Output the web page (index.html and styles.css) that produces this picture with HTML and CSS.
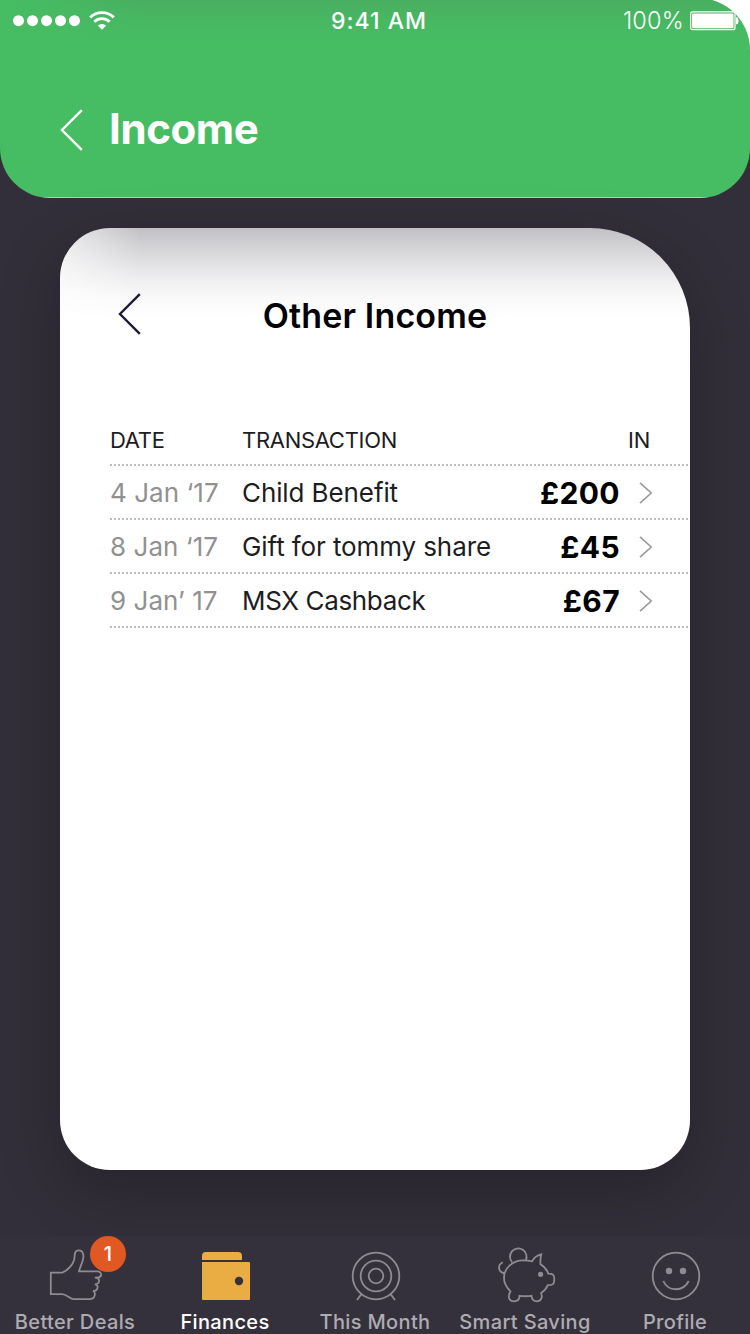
FILE: index.html
```html
<!DOCTYPE html>
<html lang="en">
<head>
<meta charset="utf-8">
<title>Income</title>
<link rel="stylesheet" href="styles.css">
</head>
<body>
<div class="screen">
  <header class="top">
    <div class="top-fill">
      <div class="status">
        <div class="signal">
          <svg width="68" height="12" viewBox="0 0 68 12" fill="#fff"><circle cx="5.5" cy="5.700" r="5.5"/><circle cx="19.5" cy="5.700" r="5.5"/><circle cx="33.5" cy="5.700" r="5.5"/><circle cx="47.5" cy="5.700" r="5.5"/><circle cx="61.5" cy="5.700" r="5.5"/></svg>
          <svg width="26" height="20" viewBox="0 0 26 20" fill="none" stroke="#fff" stroke-width="2.900"><path d="M1.200 6.400a17 17 0 0 1 23.600 0"/><path d="M5.300 10.700a11.200 11.200 0 0 1 15.400 0"/><path d="M8.800 14.600a6 6 0 0 1 8.400 0L13 18.800z" fill="#fff" stroke="none"/></svg>
        </div>
        <span class="time">9:41 AM</span>
        <div class="power">
          <span class="percent">100%</span>
          <svg width="50" height="20" viewBox="0 0 50 20"><rect x=".6" y=".9" width="44.400" height="17.800" rx="2" fill="none" stroke="#fff" stroke-width="1.200"/><rect x="2.100" y="2.400" width="41.400" height="14.800" rx="1" fill="#fff"/><path d="M46 6.300h1c2 1 2 6 0 7h-1z" fill="#fff"/></svg>
        </div>
      </div>
      <div class="title-row">
        <svg width="24" height="42" viewBox="0 0 24 42"><path class="arrow" d="M21.800 1.200 2 21l19.800 19.800"/></svg>
        <h1 class="title">Income</h1>
      </div>
    </div>
  </header>

  <main class="card">
    <div class="card-head">
      <svg class="card-back" width="24" height="42" viewBox="0 0 24 42"><path class="arrow" d="M21.800 1.200 2 21l19.800 19.800"/></svg>
      <h2 class="card-title">Other Income</h2>
    </div>
    <div class="table">
      <div class="row head"><span>DATE</span><span>TRANSACTION</span><span>IN</span></div>
      <div class="row"><span class="date">4 Jan ‘17</span><span class="name">Child Benefit</span><span class="amount">£200</span><svg class="chevron" width="14" height="22" viewBox="0 0 14 22"><path d="M1 .8 12.200 11 1 21.200"/></svg></div>
      <div class="row"><span class="date">8 Jan ‘17</span><span class="name">Gift for tommy share</span><span class="amount">£45</span><svg class="chevron" width="14" height="22" viewBox="0 0 14 22"><path d="M1 .8 12.200 11 1 21.200"/></svg></div>
      <div class="row"><span class="date">9 Jan’ 17</span><span class="name cashback">MSX Cashback</span><span class="amount">£67</span><svg class="chevron" width="14" height="22" viewBox="0 0 14 22"><path d="M1 .8 12.200 11 1 21.200"/></svg></div>
    </div>
  </main>

  <nav class="tabs">
    <div class="tab">
      <div class="icon"><svg width="60" height="60" viewBox="46 1244 60 60"><path d="M50.800 1272.600H62c6-2 11-8 12.200-13 .8-4-.4-9.300 4.600-9.300 4.400 0 5.200 4.700 4.200 9-.8 4.500-3.300 8-4 12.100h18.200c5.400 0 4.900 5.900.2 6.200h-2.600c5.600-.2 5.900 6.600 0 6.700 4.300.5 3.500 6.700-1.800 6.700 3.500 1 2 8.100-3.200 8.100H74c-4 0-7.500-5-12-5H50.800z"/></svg><span class="badge">1</span></div>
      <span>Better Deals</span>
    </div>
    <div class="tab active">
      <div class="icon"><svg width="60" height="60" viewBox="196 1244 60 60"><path d="M202 1260v-4q0-4 4-4h32q4 0 4 4v4z"/><path d="M202 1262h47q1 0 1 1v36q0 1-1 1h-46q-1 0-1-1z"/><circle cx="239" cy="1281" r="4.200"/></svg></div>
      <span>Finances</span>
    </div>
    <div class="tab">
      <div class="icon"><svg width="60" height="60" viewBox="346 1244 60 60"><circle cx="376" cy="1276" r="23.300"/><circle cx="376" cy="1276" r="15.300"/><circle cx="376" cy="1276" r="7.300"/><path d="m361.500 1294-4.500 6m33.500-6 4.500 6"/></svg></div>
      <span>This Month</span>
    </div>
    <div class="tab">
      <div class="icon"><svg width="60" height="60" viewBox="496 1244 60 60"><path d="M512.300 1262.500a8.300 8.300 0 1 1 13.400-2"/><path d="M532 1261.300c2-3.800 5-6 9.200-7-.8 3.500-1 6.500-.7 10 4 2.500 6.500 5.500 7.800 9.400 5 0 6 1.300 6 5.500 0 5-1.500 6-6.500 6-1.500 3.800-3.800 6-6.800 8 2 4-.2 8.100-4 8.100-3.700 0-5.200-1.800-5.500-5.500-4 .6-8 .6-12 0 0 3.500-2 5.500-5.500 5.500-5 0-6.700-4.300-3.500-10-4-3.800-6.500-8-6.500-13.500 0-10 9-17.500 19-17.500 3.500 0 6 .2 9 1z"/><path d="M502.800 1262.300c-6 3-4.500 10.200 2 11"/><circle class="dot" cx="540.600" cy="1274.300" r="2.600"/></svg></div>
      <span>Smart Saving</span>
    </div>
    <div class="tab">
      <div class="icon"><svg width="60" height="60" viewBox="646 1244 60 60"><circle cx="676" cy="1276" r="23.300"/><circle class="dot" cx="669" cy="1271" r="3.200"/><circle class="dot" cx="683" cy="1271" r="3.200"/><path d="M663.300 1281c5 11 20 11 25.400 0"/></svg></div>
      <span>Profile</span>
    </div>
  </nav>
</div>
</body>
</html>
```
FILE: styles.css
```css
* { box-sizing: border-box; }
body { margin: 0; font-family: Inter, "Liberation Sans", sans-serif; }
svg { display: block; flex: none; }
h1, h2 { margin: 0; }
.screen {
  width: 750px;
  height: 1334px;
  overflow: hidden;
  display: flex;
  flex-direction: column;
  background: #332f3a;
}
.top {
  height: 198px;
  flex: none;
  background: linear-gradient(#fff 0 100px, #332f3a 100px);
}
.top-fill {
  height: 200px;
  margin-top: -2px;
  padding-top: 2px;
  border-radius: 0 52px 50px 50px;
  background:
    linear-gradient(#a0dbae, #a0dbae) bottom / 666px 1px no-repeat,
    linear-gradient(90deg, #47bd63, #47bd6300 150px),
    linear-gradient(#48ae61, #47b762 22px, #47bd63 48px);
  color: #fff;
}
.arrow { fill: none; stroke: #fff; stroke-width: 2.400; }
.status {
  display: grid;
  grid-template-columns: 1fr auto 1fr;
  height: 42px;
  align-items: center;
  padding: 0 10px 0 13px;
}
.signal { display: flex; align-items: center; gap: 8px; }
.time { font-size: 23px; font-weight: 500; letter-spacing: 1px; width: 91px; white-space: nowrap; }
.power { display: flex; justify-content: flex-end; align-items: center; gap: 6px; }
.percent { font-size: 23.500px; line-height: 26px; font-weight: 300; letter-spacing: .2px; }
.title-row { display: flex; align-items: center; gap: 25px; padding: 67px 0 0 60px; height: 109px; }
.title { font-size: 42px; line-height: 40px; padding-bottom: 2px; font-weight: 700; letter-spacing: -.4px; }

.card {
  width: 630px;
  height: 942px;
  flex: none;
  margin: 30px 60px 66px;
  border-radius: 50px 100px 50px 50px;
  background:
    linear-gradient(90deg, rgba(255, 255, 255, .65), rgba(255, 255, 255, 0) 80px),
    linear-gradient(#c1c0c4, #d4d3d6 20px, #ebebed 47px, #f8f8f8 67px, #fff 90px);
  box-shadow: 0 20px 60px rgba(0, 0, 0, .25);
  padding-top: 64px;
}
.card-head { display: grid; grid-template-columns: 100px 1fr 100px; height: 44px; align-items: center; }
.card-back { margin-left: 58px; }
.card-back .arrow { stroke: #1d1b38; }
.card-title { font-size: 34px; font-weight: 600; line-height: 40px; padding-top: 4px; text-align: center; letter-spacing: .15px; white-space: nowrap; }
.table { margin: 86px 2px 0 50px; }
.row {
  height: 54px;
  display: grid;
  grid-template-columns: 132px 1fr auto 14px;
  align-items: center;
  padding: 0 35px 0 0;
  background: repeating-linear-gradient(90deg, #bcbcbc 0 2px, transparent 2px 4px) bottom / 100% 2px no-repeat;
  font-size: 26px;
  color: #1d1d1f;
  white-space: nowrap;
}
.head { height: 44px; font-size: 22px; letter-spacing: -.3px; padding-bottom: 8px; padding-right: 38px; grid-template-columns: 132px 1fr auto; }
.date, .name { padding-bottom: 2px; }
.date { color: #919191; letter-spacing: .05px; }
.name { letter-spacing: -.1px; }
.cashback { letter-spacing: -.35px; }
.amount { color: #000; font-size: 30px; font-weight: 700; letter-spacing: .4px; margin-right: 19px; }
.chevron path { fill: none; stroke: #999; stroke-width: 1.600; }

.tabs {
  height: 98px;
  flex: none;
  display: grid;
  grid-template-columns: repeat(5, 1fr);
  background: #35313c;
  position: relative;
}
.tab {
  display: flex;
  flex-direction: column;
  align-items: center;
  color: #aeacb1;
  font-size: 20px;
  line-height: 24px;
  font-weight: 500;
  letter-spacing: .35px;
  white-space: nowrap;
}
.icon { width: 60px; height: 66px; padding-top: 8px; margin-bottom: 8px; position: relative; left: 1px; }
.icon svg { fill: none; stroke: #8e8b93; stroke-width: 1.800; }
.icon .dot { fill: #8e8b93; stroke: none; }
.active { color: #fff; }
.active svg { fill: #eaad43; stroke: none; }
.active circle { fill: #35313c; }
.badge {
  position: absolute;
  left: 44px;
  top: 0;
  width: 36px;
  height: 36px;
  border-radius: 50%;
  background: #e15822;
  color: #fff;
  line-height: 36px;
  text-align: center;
}
```
